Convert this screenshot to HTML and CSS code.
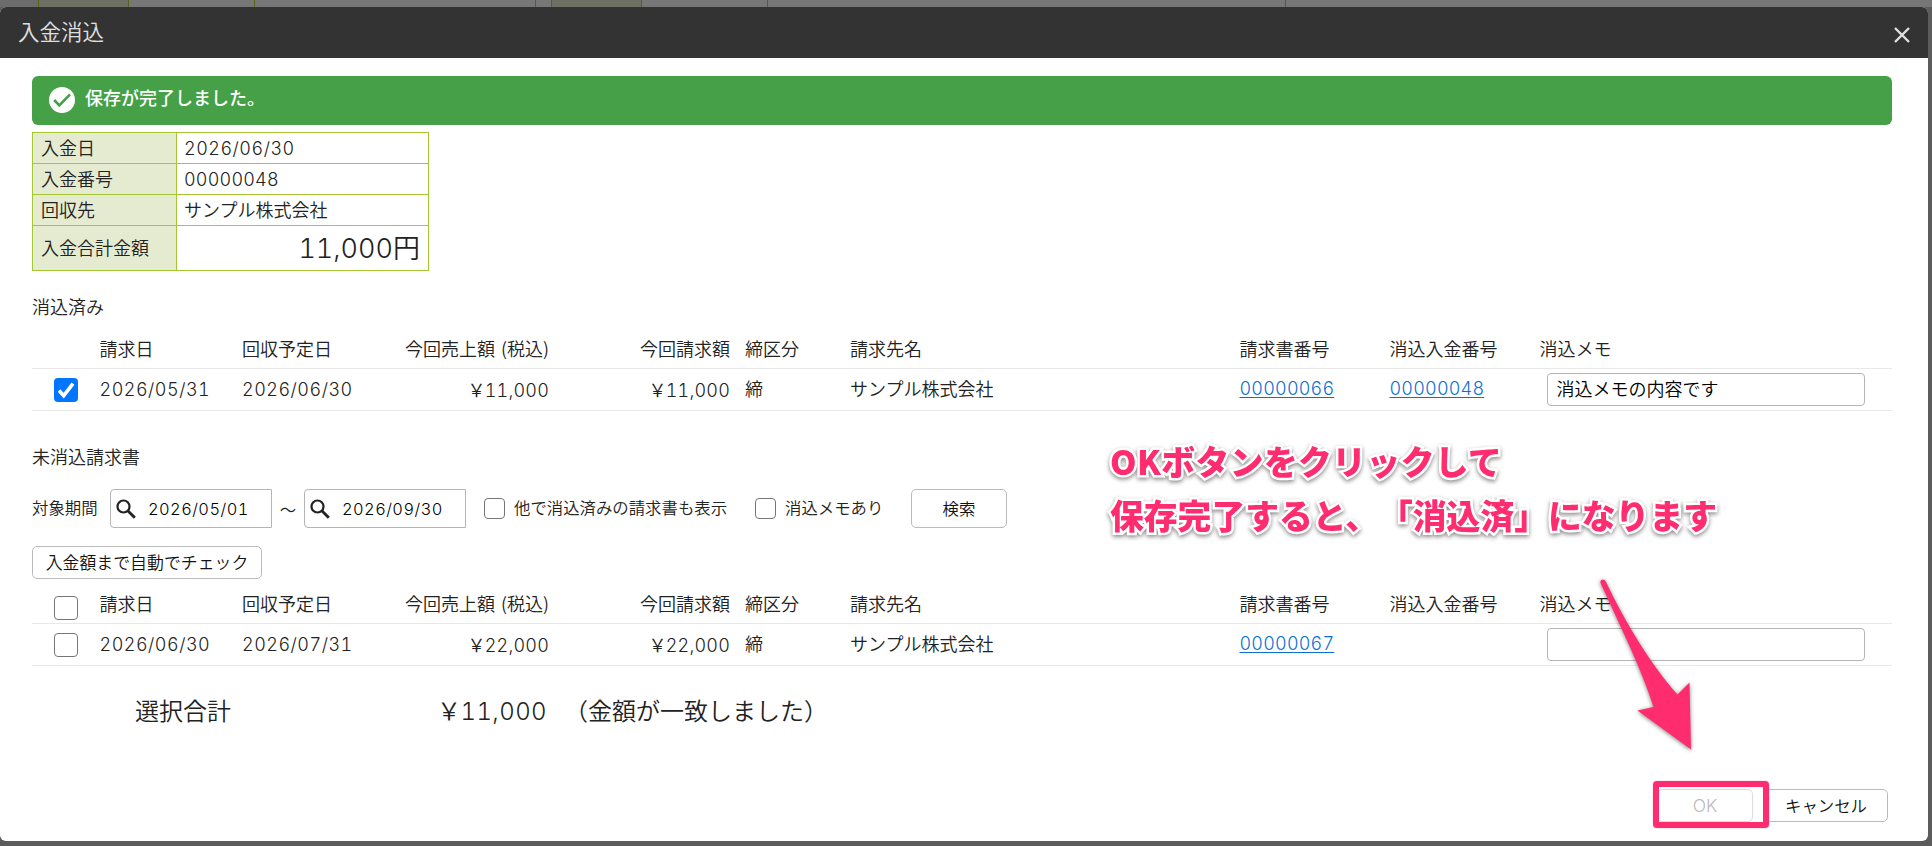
FILE: index.html
```html
<!DOCTYPE html>
<html lang="ja">
<head>
    <meta charset="UTF-8">
    <meta name="viewport" content="width=device-width, initial-scale=1.0">
    <title>入金消込</title>
    <link rel="stylesheet" href="styles.css">
</head>
<body>
    <!-- page behind the dialog -->
    <div class="backdrop">
        <div class="bg-cell bg-blank"></div>
        <div class="bg-cell bg-label w90"></div>
        <div class="bg-cell w126"></div>
        <div class="bg-cell w281"></div>
        <div class="bg-cell bg-gap"></div>
        <div class="bg-cell bg-label w90"></div>
        <div class="bg-cell w126"></div>
        <div class="bg-cell w518"></div>
        <div class="bg-cell bg-rest"></div>
    </div>

    <div class="dialog">
        <div class="dialog-header">
            <h1>入金消込</h1>
            <svg class="close" width="16" height="16" viewBox="0 0 16 16"><path d="M1 1L15 15M15 1L1 15" stroke="#e0e0e0" stroke-width="2.4" fill="none"/></svg>
        </div>

        <div class="dialog-body">
            <div class="alert">
                <svg width="26" height="26" viewBox="0 0 26 26"><circle cx="13" cy="13" r="13" fill="#fff"/><path d="M5.2 13L10.3 18.3L21 7.4" fill="none" stroke="#45a047" stroke-width="2.6"/></svg>
                <span>保存が完了しました。</span>
            </div>

            <table class="summary">
                <tr><th>入金日</th><td class="num ymd">2026/06/30</td></tr>
                <tr><th>入金番号</th><td class="num">00000048</td></tr>
                <tr><th>回収先</th><td>サンプル株式会社</td></tr>
                <tr class="total"><th>入金合計金額</th><td><span class="num">11,000</span>円</td></tr>
            </table>

            <h2 class="title-done">消込済み</h2>
            <div class="list">
                <div class="row head">
                    <span></span>
                    <span>請求日</span>
                    <span>回収予定日</span>
                    <span class="right">今回売上額 (税込)</span>
                    <span class="right">今回請求額</span>
                    <span>締区分</span>
                    <span>請求先名</span>
                    <span>請求書番号</span>
                    <span>消込入金番号</span>
                    <span>消込メモ</span>
                </div>
                <div class="row">
                    <span class="check"><i class="box checked"><svg width="24" height="24" viewBox="0 0 24 24"><path d="M5 12.5L9.7 17.6L19 5.6" fill="none" stroke="#fff" stroke-width="3.6"/></svg></i></span>
                    <span class="num ymd">2026/05/31</span>
                    <span class="num ymd">2026/06/30</span>
                    <span class="num right"><b>￥</b>11,000</span>
                    <span class="num right"><b>￥</b>11,000</span>
                    <span>締</span>
                    <span>サンプル株式会社</span>
                    <span><a class="num" href="#">00000066</a></span>
                    <span><a class="num" href="#">00000048</a></span>
                    <span class="memo">消込メモの内容です</span>
                </div>
            </div>

            <h2 class="title-open">未消込請求書</h2>
            <div class="filter">
                <span class="filter-label">対象期間</span>
                <div class="date num"><svg width="20" height="20" viewBox="0 0 20 20"><circle cx="7.5" cy="7.5" r="6" fill="none" stroke="#222" stroke-width="2.2"/><path d="M11.8 11.8L18.8 18.8" stroke="#222" stroke-width="2.8"/></svg>2026/05/01</div>
                <span class="tilde">～</span>
                <div class="date num"><svg width="20" height="20" viewBox="0 0 20 20"><circle cx="7.5" cy="7.5" r="6" fill="none" stroke="#222" stroke-width="2.2"/><path d="M11.8 11.8L18.8 18.8" stroke="#222" stroke-width="2.8"/></svg>2026/09/30</div>
                <label class="opt opt-other"><i class="box small"></i><span>他で消込済みの請求書も表示</span></label>
                <label class="opt opt-memo"><i class="box small"></i><span>消込メモあり</span></label>
                <button class="btn search">検索</button>
            </div>
            <button class="btn auto">入金額まで自動でチェック</button>

            <div class="list list-open">
                <div class="row head">
                    <span class="check"><i class="box"></i></span>
                    <span>請求日</span>
                    <span>回収予定日</span>
                    <span class="right">今回売上額 (税込)</span>
                    <span class="right">今回請求額</span>
                    <span>締区分</span>
                    <span>請求先名</span>
                    <span>請求書番号</span>
                    <span>消込入金番号</span>
                    <span>消込メモ</span>
                </div>
                <div class="row">
                    <span class="check"><i class="box"></i></span>
                    <span class="num ymd">2026/06/30</span>
                    <span class="num ymd">2026/07/31</span>
                    <span class="num right"><b>￥</b>22,000</span>
                    <span class="num right"><b>￥</b>22,000</span>
                    <span>締</span>
                    <span>サンプル株式会社</span>
                    <span><a class="num" href="#">00000067</a></span>
                    <span></span>
                    <span class="memo"></span>
                </div>
            </div>

            <div class="sum">
                <span class="sum-label">選択合計</span>
                <span class="sum-value num"><b>￥</b>11,000</span>
                <span class="sum-note">（金額が一致しました）</span>
            </div>
        </div>

        <div class="dialog-footer">
            <button class="btn ok" disabled>OK</button>
            <button class="btn cancel">キャンセル</button>
        </div>
    </div>

    <!-- guide notes drawn over the dialog -->
    <div class="note">OKボタンをクリックして<br>保存完了すると、「消込済」になります</div>
    <svg class="arrow" width="110" height="190" viewBox="0 0 110 190">
        <path d="M20.5 23C19.5 19 24.5 18 26 22C46 64 72 106 97.5 134.5L109.5 122.5L111 189.5L57.5 150.5L73.5 147C62 110 42 70 20.5 23Z" fill="#ff2d6f"/>
    </svg>
    <div class="frame"></div>
</body>
</html>
```
FILE: styles.css
```css
* {
    box-sizing: border-box;
}

body {
    margin: 0;
    width: 1932px;
    height: 846px;
    overflow: hidden;
    position: relative;
    background: #5c5c5c;
    color: #222;
    font-family: "Noto Sans CJK JP", sans-serif;
    font-size: 18px;
    font-weight: 350;
    line-height: 24px;
}

h1, h2 {
    margin: 0;
    font-weight: inherit;
}

.num {
    font-family: Inter, "Noto Sans CJK JP", sans-serif;
    font-weight: 350;
    font-variant-numeric: tabular-nums;
    letter-spacing: 0.2px;
}

.ymd {
    letter-spacing: 0.5px;
}

.num b {
    font-weight: 350;
    font-family: "Noto Sans CJK JP", sans-serif;
    margin-right: -1px;
}

/* dimmed page strip */
.backdrop {
    display: flex;
    height: 7px;
    background: #757575;
}

.bg-cell {
    border-left: 1px solid #52651d;
    background: #777;
}

.bg-blank {
    width: 38px;
    border: none;
    background: #6c6c6c;
}

.bg-label {
    background: #6d7062;
}

.w90 { width: 90px; }
.w126 { width: 126px; }
.w281 { width: 281px; }
.bg-gap { width: 16px; }
.w518 { width: 518px; }
.bg-rest { flex: 1; }

.dialog {
    width: 1928px;
    height: 834px;
    display: flex;
    flex-direction: column;
    background: #fff;
    border-radius: 6px;
    overflow: hidden;
}

.dialog-header {
    height: 51px;
    flex: none;
    display: flex;
    align-items: center;
    justify-content: space-between;
    padding: 0 18px;
    background: #333;
}

.dialog-header h1 {
    color: #e0e0e0;
    font-size: 21.5px;
    line-height: 28px;
    margin-bottom: 4px;
}

.close {
    margin-top: 4px;
}

.dialog-body {
    flex: 1;
    padding: 18px 36px 0 32px;
}

.alert {
    height: 49px;
    display: flex;
    align-items: center;
    gap: 10px;
    padding-left: 17px;
    border-radius: 6px;
    background: #45a047;
    color: #fff;
    font-weight: 500;
}

.alert svg {
    margin-bottom: 1px;
}

.alert span {
    margin-bottom: 7px;
}

.summary {
    margin-top: 7px;
    width: 397px;
    border-collapse: collapse;
    table-layout: fixed;
}

.summary th,
.summary td {
    height: 31px;
    padding: 0 8px 2px;
    border: 1px solid #a5c832;
    text-align: left;
    font-weight: inherit;
}

.summary td {
    padding-left: 7px;
}

.summary td.num {
    padding-top: 1px;
    padding-bottom: 0;
    font-weight: 350;
}

.summary th {
    width: 144px;
    background: #e5ebd0;
}

.summary .total th,
.summary .total td {
    height: 45px;
}

.summary .total td {
    padding-bottom: 0;
    text-align: right;
    font-size: 27px;
    line-height: 30px;
}

.summary .total .num {
    letter-spacing: 0;
}

.title-done,
.title-open {
    font-size: 18px;
}

.title-done {
    margin-top: 23px;
}

.title-open {
    margin-top: 33px;
}

.list {
    margin-top: 13px;
}

.row {
    display: grid;
    grid-template-columns: 67.5px 142.5px 151px 156px 181px 120px 389.5px 150px 150px 1fr;
    align-items: center;
    height: 42px;
    border-bottom: 1px solid #e8e8e8;
}

.row > span {
    white-space: nowrap;
    padding-bottom: 3px;
}

.row > .num,
.row > .check {
    padding-bottom: 0;
}

.row.head {
    height: 38px;
}

.right {
    text-align: right;
}

.row.head > :nth-child(4) {
    word-spacing: 2px;
}

.row > :nth-child(6) {
    padding-left: 15px;
}

.row a {
    color: #0b6fd3;
    text-underline-offset: 2px;
}

.check {
    padding-left: 22px;
    display: flex;
}

.box {
    width: 24px;
    height: 24px;
    flex: none;
    display: block;
    border: 1.5px solid #767676;
    border-radius: 4px;
    background: #fff;
}

.box.checked {
    border: none;
    background: #0075ff;
}

.box.small {
    width: 21px;
    height: 21px;
}

.row > .memo {
    margin-left: 7px;
    width: 318px;
    height: 33px;
    padding: 2px 9px;
    border: 1px solid #b5b5b5;
    border-radius: 4px;
    color: #000;
}

.filter {
    display: flex;
    align-items: center;
    margin-top: 21px;
    height: 39px;
    font-size: 16.4px;
    white-space: nowrap;
}

.filter-label {
    width: 78px;
    margin-bottom: 3px;
}

.date {
    width: 162px;
    height: 39px;
    display: flex;
    align-items: center;
    padding-left: 5px;
    border: 1px solid #b5b5b5;
    border-radius: 4px 0 0 4px;
    color: #000;
    letter-spacing: 0.45px;
}

.date svg {
    margin-right: 12px;
}

.tilde {
    width: 32px;
    text-align: center;
}

.opt {
    display: flex;
    align-items: center;
    gap: 9px;
}

.opt span {
    margin-bottom: 3px;
}

.opt-other {
    width: 271px;
    margin-left: 18px;
}

.opt-memo {
    width: 156px;
}

.btn {
    padding: 0 0 1px;
    border: 1px solid #bbb;
    border-radius: 5px;
    background: #fff;
    color: #111;
    font: inherit;
    font-size: 16.4px;
}

.search {
    width: 96px;
    height: 39px;
}

.auto {
    display: block;
    width: 230px;
    height: 33px;
    margin-top: 18px;
    font-size: 16.9px;
}

.list-open {
    margin-top: 7px;
}

.list-open .head .check {
    padding-top: 6px;
    padding-bottom: 0;
}

.sum {
    display: flex;
    align-items: center;
    margin-top: 27px;
    height: 34px;
    padding-left: 103px;
    font-size: 24px;
    line-height: 34px;
}

.sum-label {
    width: 240px;
}

.sum-value {
    width: 172px;
    padding-top: 2px;
    text-align: right;
    letter-spacing: 0.4px;
}

.sum-note {
    margin-left: 17px;
}

.dialog-footer {
    display: flex;
    justify-content: flex-end;
    gap: 11px;
    padding: 0 40px 19px 0;
}

.dialog-footer .btn {
    height: 33px;
    padding-bottom: 2px;
}

.dialog-footer .ok {
    width: 96px;
    font-family: Inter, sans-serif;
    font-size: 17.5px;
    padding-bottom: 0;
}

.ok:disabled {
    color: #bbb;
    border-color: #ddd;
}

.cancel {
    width: 124px;
}

.note {
    position: absolute;
    left: 1110px;
    top: 434px;
    color: #ff2d6f;
    font-size: 33.8px;
    font-weight: 900;
    line-height: 54px;
    white-space: nowrap;
    text-spacing-trim: space-all;
    -webkit-text-stroke: 5px #fff;
    paint-order: stroke fill;
    filter: drop-shadow(0 2px 2px rgba(0, 0, 0, 0.45));
}

.note::first-line {
    letter-spacing: 0.4px;
}

.arrow {
    position: absolute;
    left: 1580px;
    top: 560px;
    overflow: visible;
    filter: drop-shadow(0 1px 2px rgba(0, 0, 0, 0.5));
}

.frame {
    position: absolute;
    left: 1653px;
    top: 781px;
    width: 116px;
    height: 47px;
    border: 6px solid #ff2d6f;
    border-radius: 4px;
    box-shadow: 0 0 1px #ff2d6f;
}
```
